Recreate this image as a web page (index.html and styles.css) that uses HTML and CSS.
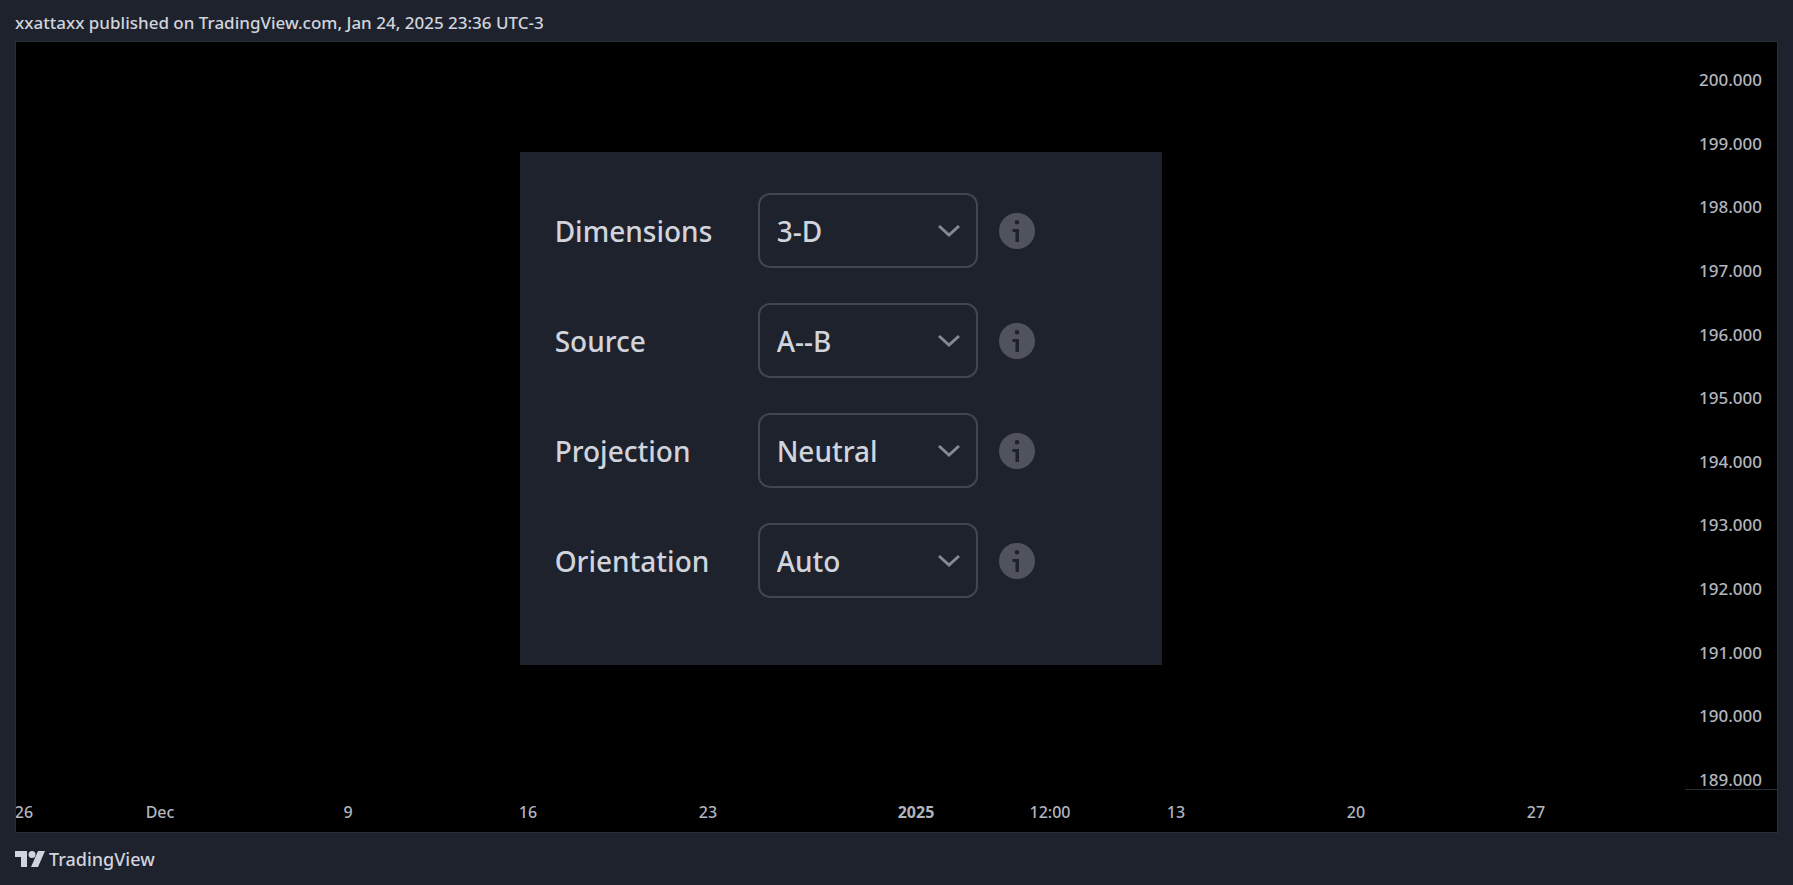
FILE: index.html
```html
<!DOCTYPE html>
<html lang="en">
<head>
<meta charset="utf-8">
<title>TradingView</title>
<link rel="stylesheet" href="styles.css">
</head>
<body>
<svg class="defs" aria-hidden="true">
  <symbol id="info" viewBox="0 0 36 36"><path fill-rule="evenodd" d="M18 0a18 18 0 1 1 0 36a18 18 0 1 1 0-36ZM18 7a2.300 2.300 0 1 0 0 4.600a2.300 2.300 0 1 0 0-4.600ZM13.500 16v3H16.500v10H20V16Z"/></symbol>
  <symbol id="chevron" viewBox="0 0 22 14"><path d="M1 2l10 9 10-9" fill="none" stroke="currentColor" stroke-width="3"/></symbol>
</svg>
<header class="byline">xxattaxx published on TradingView.com, Jan 24, 2025 23:36 UTC-3</header>
<main class="chart">
  <div class="upper">
    <section class="plot">
      <form class="panel">
        <div class="row">
          <label for="dimensions">Dimensions</label>
          <div class="field"><select id="dimensions"><option>3-D</option></select><svg class="chevron"><use href="#chevron"/></svg></div>
          <button type="button" class="info" aria-label="About dimensions"><svg><use href="#info"/></svg></button>
        </div>
        <div class="row">
          <label for="source">Source</label>
          <div class="field"><select id="source"><option>A--B</option></select><svg class="chevron"><use href="#chevron"/></svg></div>
          <button type="button" class="info" aria-label="About source"><svg><use href="#info"/></svg></button>
        </div>
        <div class="row">
          <label for="projection">Projection</label>
          <div class="field"><select id="projection"><option>Neutral</option></select><svg class="chevron"><use href="#chevron"/></svg></div>
          <button type="button" class="info" aria-label="About projection"><svg><use href="#info"/></svg></button>
        </div>
        <div class="row">
          <label for="orientation">Orientation</label>
          <div class="field"><select id="orientation"><option>Auto</option></select><svg class="chevron"><use href="#chevron"/></svg></div>
          <button type="button" class="info" aria-label="About orientation"><svg><use href="#info"/></svg></button>
        </div>
      </form>
    </section>
    <aside class="prices">
      <span>200.000</span><span>199.000</span><span>198.000</span><span>197.000</span><span>196.000</span><span>195.000</span><span>194.000</span><span>193.000</span><span>192.000</span><span>191.000</span><span>190.000</span><span>189.000</span>
    </aside>
  </div>
  <div class="times">
    <span>26</span><span>Dec</span><span>9</span><span>16</span><span>23</span><span class="year">2025</span><span>12:00</span><span>13</span><span>20</span><span>27</span>
  </div>
</main>
<footer class="brand">
  <svg class="logo" viewBox="0 0 30 16" aria-hidden="true"><path d="M0 0h12v16H6V6H0ZM23 0h7l-7 16h-7Z"/><circle cx="17" cy="3.500" r="3.500"/></svg>
  <span>TradingView</span>
</footer>
</body>
</html>
```
FILE: styles.css
```css
* { box-sizing: border-box; }

body {
  margin: 0;
  min-height: 100vh;
  display: flex;
  flex-direction: column;
  padding: 0 15px;
  background: #1e222d;
  color: #d1d4dc;
  font-family: "Noto Sans", "Open Sans", sans-serif;
  font-size: 17px;
  font-weight: 500;
}

.defs { display: none; }

.byline {
  height: 41px;
  padding-top: 2px;
  line-height: 41px;
  white-space: nowrap;
}

.chart {
  flex: 1;
  display: flex;
  flex-direction: column;
  border: 1px solid #2a2e39;
  background: #000;
  color: #b2b5be;
  font-size: 16px;
  overflow: hidden;
}

.upper { flex: 1; display: flex; }

.plot {
  flex: 1;
  padding: 110px 0 0 28.6%;
}

.panel {
  width: 642px;
  padding: 41px 35px 67px;
  display: flex;
  flex-direction: column;
  gap: 35px;
  background: #1e222d;
  color: #d1d4dc;
  font-size: 28px;
}

.row {
  display: grid;
  grid-template-columns: 203px 220px 57px;
  align-items: center;
}

.row label { line-height: 36px; }

.field { display: grid; align-items: center; }

.field > * { grid-area: 1 / 1; }

.field select {
  appearance: none;
  width: 100%;
  height: 75px;
  padding: 0 17px;
  border: 2px solid #434651;
  border-radius: 12px;
  background: transparent;
  color: inherit;
  font: inherit;
}

.chevron {
  justify-self: end;
  width: 22px;
  height: 14px;
  margin-right: 18px;
  color: #868993;
  pointer-events: none;
}

.info {
  width: 36px;
  height: 36px;
  margin-left: 21px;
  padding: 0;
  border: 0;
  background: none;
  fill: #50535e;
}

.info svg { display: block; width: 36px; height: 36px; }

.prices {
  width: 92px;
  padding: 29px 15px 0 0;
  display: flex;
  flex-direction: column;
  justify-content: space-between;
  align-items: flex-end;
  font-size: 17px;
  line-height: 18px;
  border-bottom: 1px solid #2a2e39;
}

.times {
  height: 42px;
  padding-right: 92px;
  display: grid;
  grid-template-columns: 8fr 136fr 188fr 180fr 180fr 208fr 134fr 126fr 180fr 180fr 149fr;
  line-height: 44px;
}

.times span {
  width: 0;
  display: flex;
  justify-content: center;
}

.times span:first-child { grid-column-start: 2; }

.year { font-weight: 700; }

.brand {
  height: 52px;
  display: flex;
  align-items: center;
  gap: 4px;
  font-size: 18px;
}

.logo { width: 30px; height: 16px; fill: #d1d4dc; }
```
